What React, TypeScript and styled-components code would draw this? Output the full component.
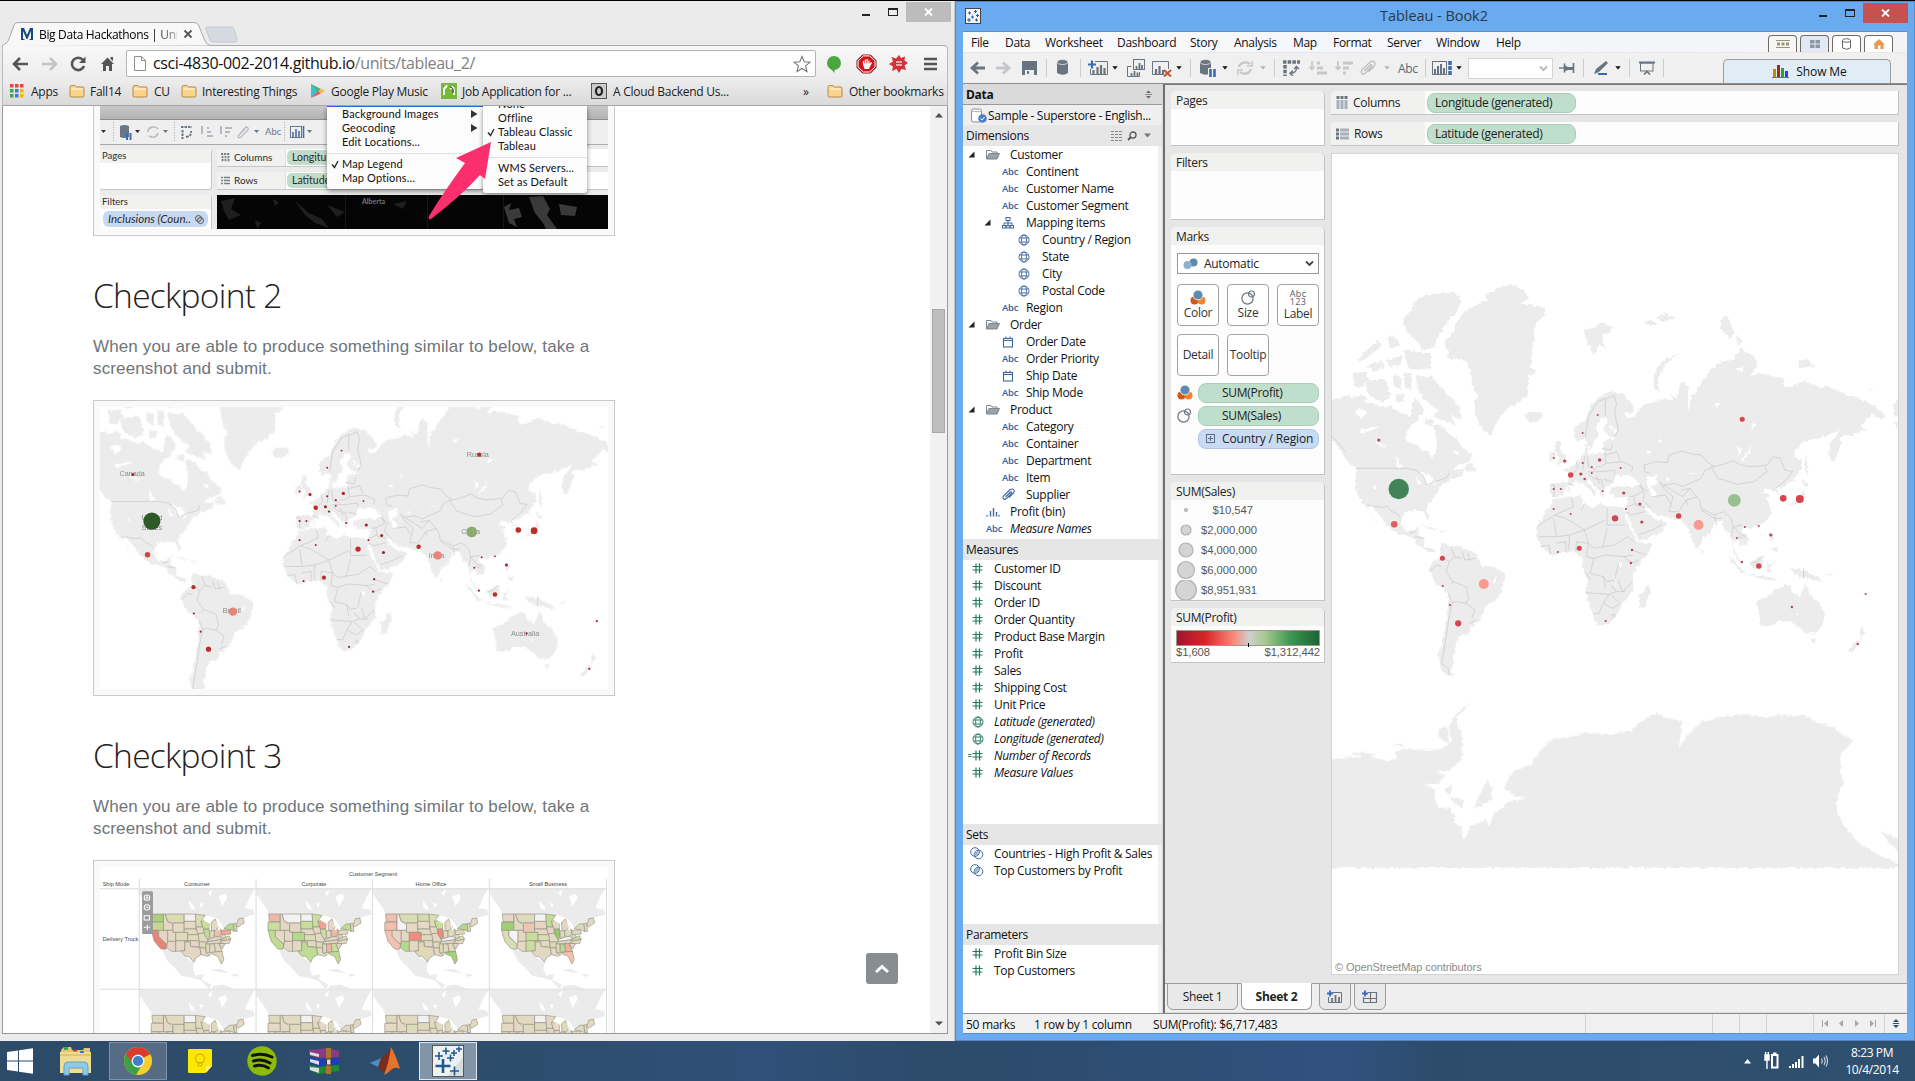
import React from "react";
import styled, { createGlobalStyle } from "styled-components";

const UI = '"Open Sans", "Noto Sans", sans-serif';
const ARIAL = '"Liberation Sans", Arial, sans-serif';
const MAC = 'Lato, "Open Sans", sans-serif';

const Global = createGlobalStyle`
  html, body { margin: 0; padding: 0; overflow: hidden; background: #2d4d6c; }
  * { box-sizing: border-box; }
  svg { display: block; flex: none; }
`;

/* ---------- world map ---------- */

const KX = 1 / 2.658;
const KY = 1 / 3;

const LAND = [
  "M10,390 L45,382 65,370 72,384 95,372 110,385 105,395 130,400 150,412 175,408 190,425 210,432 228,440 230,410 238,385 250,395 264,420 252,440 245,455 228,465 215,490 218,515 245,525 258,540 275,545 285,565 292,550 295,530 298,510 290,485 288,468 300,462 320,475 330,498 350,500 355,520 375,540 390,560 385,575 350,588 340,598 372,600 365,612 345,625 330,632 320,640 305,650 300,668 290,685 272,705 268,718 278,745 272,748 262,725 240,720 225,722 212,728 203,740 202,760 215,785 235,778 250,770 245,790 265,810 262,830 290,838 300,845 280,846 262,838 240,815 225,798 200,795 175,778 160,760 145,735 125,708 113,708 125,740 148,768 130,745 118,720 100,700 88,680 80,640 83,595 60,575 45,548 10,495Z",
  "M305,70 L340,65 365,90 350,125 330,150 305,190 290,230 260,240 245,215 215,180 207,150 230,120 235,95 265,75Z",
  "M490,42 L525,55 543,85 520,98 585,115 583,135 560,165 555,200 550,245 546,290 560,305 540,320 540,370 520,395 490,410 465,440 450,470 442,497 425,485 408,460 400,430 398,395 408,380 395,360 390,330 385,295 370,270 325,265 330,245 315,220 345,180 345,165 365,130 410,100 430,92 425,75 450,60Z",
  "M88,270 L110,240 140,210 150,230 120,255 100,272Z M110,290 L150,270 160,290 130,305Z M165,205 L185,195 200,230 175,235Z M165,270 L205,255 200,285 170,290Z M210,240 L280,250 282,298 225,298 215,270Z M75,310 L110,305 115,330 90,355 76,345Z M105,335 L160,325 175,385 150,395 115,372Z M180,315 L200,318 205,360 185,350Z M210,310 L230,310 228,360 212,350Z M186,375 L212,372 205,398 190,395Z M238,318 L285,320 305,350 325,370 360,415 362,450 335,435 348,465 310,450 290,440 300,420 275,400 250,365Z M265,445 L290,450 285,470 265,460Z M365,590 L390,580 402,605 385,608Z",
  "M530,432 L545,425 575,428 578,445 555,460 535,452Z M1530,388 L1508,400 1516,412 1508,430 1530,445Z M1512,458 L1530,455 1522,478Z",
  "M687,180 L715,172 735,160 762,170 758,190 735,192 745,240 728,222 715,258 700,225Z M845,155 L870,150 885,165 860,165Z M880,145 L905,128 930,145 905,155Z",
  "M945,250 L925,262 900,290 885,320 885,350 892,368 875,355 873,330 880,300 905,265Z",
  "M1065,135 L1077,150 1088,190 1075,205 1055,180 1050,155Z M1090,195 L1112,210 1100,228Z M1255,270 L1290,272 1300,288 1260,295Z M1442,355 L1458,358 1450,364Z",
  "M600,640 L645,640 650,615 632,600 655,590 668,575 685,560 692,545 690,520 700,525 698,550 720,552 743,545 738,532 745,510 775,504 752,498 740,478 752,455 745,440 735,445 722,470 728,495 715,515 705,542 697,520 692,505 672,515 662,500 665,470 692,450 707,405 730,380 760,362 790,372 825,412 815,430 795,425 805,445 820,440 830,425 850,402 880,395 905,385 925,395 915,370 938,385 942,345 955,333 965,350 965,425 975,380 985,365 1000,340 1025,300 1050,275 1085,270 1105,235 1145,260 1148,290 1130,318 1160,310 1195,320 1218,325 1222,355 1250,345 1275,332 1310,350 1340,350 1380,370 1420,385 1455,405 1490,435 1480,448 1450,430 1440,455 1425,465 1438,480 1400,495 1370,500 1372,520 1355,570 1345,575 1338,550 1345,515 1370,480 1345,490 1330,500 1300,508 1275,512 1250,540 1245,558 1268,570 1265,600 1243,632 1220,650 1200,655 1205,668 1228,690 1215,697 1208,672 1195,665 1172,655 1160,666 1182,672 1175,690 1187,715 1183,740 1160,765 1130,775 1112,770 1110,785 1125,800 1122,820 1105,828 1098,815 1088,812 1084,830 1095,850 1105,878 1100,878 1088,850 1082,820 1078,790 1062,780 1055,750 1040,755 1020,790 1000,810 992,838 982,830 970,795 965,770 945,752 915,740 885,738 870,728 860,712 850,712 862,735 875,745 885,755 892,745 907,760 895,785 860,805 835,812 825,790 810,750 800,725 800,712 805,690 808,680 775,684 758,672 757,655 785,650 820,650 838,642 818,620 800,612 790,625 780,612 770,620 768,635 755,648 745,650 738,680 725,660 712,640 700,625 697,640 722,665 715,680 710,665 685,640 665,632 645,650 630,678 610,685 598,670Z",
  "M1278,550 L1284,590 1280,622 1275,590Z M1265,630 L1290,640 1275,650Z M1270,655 L1278,680 1262,700 1228,706 1250,695 1265,678Z M615,512 L630,517 625,535 640,560 645,578 615,585 625,565 612,545Z M597,548 L612,548 610,570 595,575Z M646,650 L652,652 648,672Z",
  "M605,690 L640,680 680,678 687,700 715,712 730,700 760,712 790,712 802,728 797,740 815,780 830,815 868,822 860,850 830,890 818,915 820,960 790,1000 785,1020 755,1060 725,1067 712,1030 692,970 700,930 682,895 685,865 665,845 640,845 605,857 575,830 562,800 562,770 590,720Z",
  "M862,942 L865,960 850,1010 835,1012 835,980Z",
  "M312,820 L330,828 360,828 400,850 415,885 455,895 483,915 470,950 463,985 430,1005 410,1050 395,1070 385,1068 385,1090 355,1100 345,1135 340,1160 346,1180 330,1200 345,1217 325,1217 308,1200 302,1160 315,1100 325,1040 328,970 300,945 276,905 285,875 308,860 305,835Z",
  "M1148,995 L1185,975 1200,955 1220,945 1240,948 1238,965 1262,980 1278,937 1290,975 1310,995 1328,1030 1325,1060 1305,1090 1280,1090 1262,1075 1240,1055 1210,1052 1180,1068 1158,1068 1155,1040Z M1290,1105 L1305,1105 1298,1127Z M1422,1070 L1438,1090 1422,1108Z M1412,1112 L1425,1112 1400,1145 1388,1145Z",
  "M1068,850 L1100,885 1118,908 1105,905 1080,875Z M1115,912 L1175,920 1207,928 1170,930Z M1130,878 L1152,862 1165,855 1165,870 1158,897 1138,895Z M1175,880 L1195,878 1184,888 1186,908 1176,908Z M1232,893 L1270,900 1300,915 1325,936 1285,925 1260,922Z M1330,915 L1350,908 1346,918Z M1182,755 L1184,748 1182,768Z M1182,790 L1190,792 1192,810 1184,812Z M1185,835 L1203,830 1203,848Z M998,832 L1007,845 1001,852Z M248,765 L275,768 305,780 285,778Z M300,782 L330,786 308,788Z",
];

const ANTARCTICA =
  "M10,360 L60,352 120,350 165,363 192,360 185,335 215,325 240,330 295,330 322,320 335,305 330,255 345,225 390,185 350,232 350,255 365,280 365,340 355,370 325,395 292,395 320,408 300,430 262,432 295,450 290,470 300,500 330,505 345,530 345,550 362,560 370,600 390,555 430,540 435,560 450,520 490,485 535,475 505,468 480,450 478,430 500,395 552,370 570,335 600,298 650,290 690,278 760,285 815,270 845,240 880,220 910,235 950,242 940,325 960,290 1000,245 1050,230 1110,222 1170,232 1210,225 1280,228 1300,245 1350,262 1370,280 1405,300 1370,345 1370,400 1380,430 1362,460 1360,510 1380,560 1420,610 1480,650 1530,672 V684 H10Z M430,420 L445,440 442,480 410,503 395,500 415,455Z M320,450 L338,432 332,470 370,478 365,505 345,490Z M1475,573 L1530,600 1530,640 1500,610Z M300,265 L325,260 330,310 308,300Z M65,340 L90,335 140,345 110,352Z M178,315 L210,308 205,320Z";

const WATER =
  "M78,425 L100,415 112,430 95,445Z M90,480 L125,470 140,475 100,490Z M130,510 L150,520 165,530 148,528Z M185,555 L198,575 205,598 192,590Z M240,612 L256,640 245,640Z M250,608 L275,612 290,630 272,648 262,625Z M268,644 L300,632 290,645Z M335,545 L352,542 355,556Z M852,622 L880,618 882,640 868,648 884,680 868,678 858,650Z M858,540 L872,540 862,560Z M905,625 L920,625 912,636Z M965,610 L992,608 970,616Z M1133,528 L1128,548 1112,572 1106,568 1122,550Z M1095,530 L1106,540 1098,560Z M1132,458 L1145,465 1136,480Z M1035,400 L1055,398 1040,410Z M1088,295 L1112,288 1110,305Z M755,465 L765,470 760,490Z M767,475 L777,480 770,495Z M890,500 L896,510 890,522Z M778,880 L792,878 786,895Z M443,930 L458,920 452,938Z M768,915 L774,930 772,948Z M130,646 L138,650 134,656Z M1253,1025 L1260,1030 1255,1036Z";

const BORDERS =
  "M83,595 H215 L240,600 262,618 270,645 300,632 325,622 330,607 M18,500 L30,512 54,545 M113,706 L150,712 165,709 178,725 190,730 203,745 M225,790 L240,785 M240,800 L262,805 M308,860 L330,875 345,860 M335,832 L345,860 365,865 M365,845 L372,870 400,865 M380,850 L385,872 M330,875 L322,905 340,935 335,945 M276,905 L298,885 310,888 M340,935 L375,950 382,985 375,1000 M328,970 L338,998 350,995 375,1000 398,1020 390,1045 M385,1060 L402,1050 M338,998 L330,1040 322,1100 315,1150 310,1180 328,1195 330,1217 M692,500 L700,440 725,395 745,385 M745,385 L745,438 M745,388 L768,375 775,400 770,430 780,480 770,500 M600,645 L610,645 608,680 M645,640 L662,648 M668,575 L672,595 660,610 M690,560 L685,600 M698,558 L700,590 720,600 M743,548 L747,580 735,590 720,590 M700,605 L735,605 M747,580 L790,575 818,590 815,605 M735,535 L760,540 765,520 M745,555 L775,545 785,570 M735,605 L770,600 770,612 M700,612 L715,625 735,630 740,655 M720,615 L730,640 M740,628 L765,635 M848,585 L880,575 910,578 915,555 950,543 975,552 1000,555 1018,578 1035,590 1010,600 1000,625 950,650 930,640 900,645 890,635 M848,585 L850,605 865,610 M1035,590 L1062,582 1085,572 1105,585 1130,590 1155,588 1175,585 1190,560 1210,565 1222,600 1243,605 1225,630 1198,655 M1025,588 L1045,625 1095,643 1140,635 1175,605 1170,590 M890,635 L900,655 925,680 M900,645 L950,680 970,655 945,660 M925,680 L915,725 940,725 960,690 990,680 M970,655 L995,690 1000,715 1035,735 1060,725 1080,745 1085,770 1110,765 M958,690 L965,705 M1000,720 L1035,745 1055,745 M1036,735 L1040,765 M1085,770 L1080,800 M1085,770 L1100,790 1118,800 M1098,800 L1112,805 M838,642 L845,665 820,678 808,680 M850,665 L845,690 865,712 M820,678 L825,705 850,712 M800,712 L825,700 M800,725 L815,735 850,725 M832,795 L870,780 895,765 M835,648 L858,665 M870,680 L905,675 918,700 M610,735 L640,745 690,780 745,750 M655,685 L660,710 610,735 563,770 M690,700 L682,720 M750,712 V765 H795 M750,775 L745,800 738,830 M690,780 L700,820 715,835 738,830 770,825 805,800 M608,745 L615,800 570,800 M615,800 L650,795 690,780 M640,845 L640,815 615,820 M650,795 L648,840 M667,845 L668,815 700,820 M600,855 L595,825 575,830 M700,820 L695,860 715,865 745,855 795,860 820,855 M715,865 L705,910 740,920 750,935 770,930 780,880 M695,910 L705,930 M795,860 L815,880 835,870 M815,840 L855,855 M820,815 L805,800 M695,968 L755,973 775,965 760,945 M740,920 L745,955 M755,973 L740,1000 728,1030 712,1030 M740,1000 L765,1015 785,1000 760,975 M775,965 L800,965 M780,930 L790,965 818,935 M762,1036 L770,1032 772,1040 765,1044Z M1272,895 V925 M1132,880 L1150,875 1160,860 M606,548 L612,555";

type Tone = "green" | "sage" | "salmon" | "coral" | "red" | "dark";
const POINTS: [number, number, number, Tone][] = [
  [196, 657, 10.2, "green"], [1088, 691, 6.4, "sage"], [993, 765, 5, "salmon"], [422, 942, 5, "salmon"],
  [184, 763, 3.3, "coral"], [1262, 687, 4, "red"], [1218, 685, 3.3, "red"], [771, 745, 3.2, "red"],
  [653, 615, 2.7, "red"], [354, 1060, 3.1, "red"], [1153, 888, 2.7, "red"], [940, 738, 2.7, "red"],
  [676, 835, 2.5, "red"], [312, 865, 2.5, "red"], [1109, 448, 2.5, "red"], [143, 510, 1.6, "dark"],
  [637, 573, 1.6, "dark"], [730, 570, 1.7, "dark"], [680, 612, 1.6, "dark"], [794, 669, 1.6, "dark"],
  [837, 702, 1.6, "dark"], [842, 756, 1.6, "dark"], [1185, 795, 1.6, "dark"], [725, 435, 1, "dark"],
  [685, 489, 1, "dark"], [608, 564, 1.1, "dark"], [685, 579, 1.1, "dark"], [709, 591, 1.1, "dark"],
  [709, 609, 1, "dark"], [690, 627, 1.2, "dark"], [786, 594, 1, "dark"], [608, 657, 1.1, "dark"],
  [627, 657, 1.1, "dark"], [738, 663, 1.1, "dark"], [608, 717, 1.1, "dark"], [653, 732, 1, "dark"],
  [800, 717, 1.1, "dark"], [619, 846, 1.1, "dark"], [816, 840, 1.2, "dark"], [813, 879, 1.2, "dark"],
  [746, 1053, 1.1, "dark"], [313, 948, 1.1, "dark"], [332, 1005, 1.1, "dark"], [1095, 804, 1, "dark"],
  [1116, 771, 1, "dark"], [1153, 768, 1, "dark"], [1108, 876, 1.2, "dark"], [1241, 1011, 1.2, "dark"],
  [1416, 1122, 1.2, "dark"], [1437, 972, 1.1, "dark"],
];

const SOFT: Record<Tone, string> = {
  green: "#41845a", sage: "#9bc08f", salmon: "#f79b8f", coral: "#e0605a", red: "#d5454a", dark: "#bd4352",
};
const DEEP: Record<Tone, string> = {
  green: "#2d5a27", sage: "#8cab6e", salmon: "#e88578", coral: "#cb4a41", red: "#b92e2c", dark: "#a5222c",
};

const World = ({ id, tones, k, labels }: { id: string; tones: Record<Tone, string>; k: number; labels?: [string, number, number][] }) => (
  <>
    <defs>
      <filter id={id} x="-5%" y="-5%" width="110%" height="110%">
        <feTurbulence type="fractalNoise" baseFrequency="0.25" numOctaves="2" seed="4" result="n" />
        <feDisplacementMap in="SourceGraphic" in2="n" scale="5" xChannelSelector="R" yChannelSelector="G" />
      </filter>
    </defs>
    <g filter={`url(#${id})`}>
      <g transform={`scale(${KX} ${KY})`} fill="#ececec">
        {LAND.map((d) => <path key={d.slice(0, 16)} d={d} />)}
        <path d={ANTARCTICA} transform="translate(0 1110)" />
        <path d={WATER} fill="#fff" />
      </g>
    </g>
    <path d={BORDERS} transform={`scale(${KX} ${KY})`} fill="none" stroke="#cbcbcb" strokeWidth="2.200" strokeLinejoin="round" />
    {labels?.map(([t, x, y]) => (
      <text key={t} x={x * KX} y={y * KY + 2.5} textAnchor="middle" fontFamily={ARIAL} fontSize="7.6" fill="#8a8a8a">{t}</text>
    ))}
    {POINTS.map(([x, y, r, t]) => (
      <circle key={`${x}-${y}`} cx={x * KX} cy={y * KY} r={r < 2 ? r : r * k} fill={tones[t]} />
    ))}
  </>
);

/* ---------- shared window pieces ---------- */

const Desktop = styled.div`
  width: 1915px; height: 1081px; display: grid;
  grid-template: 1040px 40px / 955px 960px; border-top: 1px solid #000;
  font-family: ${UI}; font-size: 12px; color: #111; background: #2d4d6c;
`;
const Row = styled.div<{ w?: number; h?: number; gap?: number; pl?: number }>`
  display: flex; align-items: center; flex: none;
  ${(p) => p.w && `width:${p.w}px;`} ${(p) => p.h && `height:${p.h}px;`}
  ${(p) => p.gap && `gap:${p.gap}px;`} ${(p) => p.pl && `padding-left:${p.pl}px;`}
`;
const Spacer = styled.div`flex: 1;`;
const Controls = styled.div<{ pr: number }>`
  display: flex; justify-content: flex-end; align-items: flex-start; margin-left: auto; margin-right: ${(p) => p.pr}px; padding-top: 1px;
`;
const Close = styled.div<{ red?: boolean }>`
  width: 45px; height: 20px; display: grid; place-items: center; background: ${(p) => (p.red ? "#c75050" : "#bcbcbc")};
`;
const WindowButtons = ({ red, pr }: { red?: boolean; pr: number }) => (
  <Controls pr={pr}>
    <svg width="52" height="20">
      <path d="M8 13H16" stroke="#222" strokeWidth="2" />
      <rect x="34.500" y="6.500" width="9" height="7" fill="none" stroke="#222" />
      <path d="M34 7H44" stroke="#222" strokeWidth="2" />
    </svg>
    <Close red={red}>
      <svg width="9" height="8"><path d="M1 .5L8 7.500M8 .5L1 7.500" stroke="#fff" strokeWidth="1.800" /></svg>
    </Close>
  </Controls>
);

/* ---------- browser ---------- */

const Browser = styled.section`
  background: #ebebeb; display: flex; flex-direction: column; padding: 0 6px 7px 2px; border-right: 1px solid #c9c9c9; overflow: hidden; height: 1040px;
`;
const TabStrip = styled.div`height: 44px; display: flex; align-items: flex-start; justify-content: space-between; margin: 0 -3px 0 0;`;
const TabArea = styled.div`display: flex; align-items: flex-end; height: 44px; position: relative;`;
const TabShape = styled.svg`position: absolute; left: 0; top: 20px;`;
const TabText = styled.div`
  position: relative; display: flex; align-items: center; gap: 6px; height: 22px; padding-left: 19px;
  span { width: 138px; letter-spacing: -0.34px; white-space: nowrap; overflow: hidden;
    background: linear-gradient(90deg, #000 82%, #aaa 100%); -webkit-background-clip: text; color: transparent; }
`;
const NavBar = styled.div`
  height: 35px; display: flex; align-items: center; padding: 1px 0 0 8px; border-top: 1px solid #a9a9a9; border-left: 1px solid #bbb;
  border-right: 1px solid #bbb; background: linear-gradient(#f8f8f8, #ececec); border-radius: 0 4px 0 0;
`;
const Omnibox = styled.div`
  width: 690px; height: 27px; border: 1px solid #b3b3b3; border-radius: 2px; background: #fff; display: flex; align-items: center; padding: 0 4px 0 7px;
  font-size: 16px; white-space: nowrap; color: #111; letter-spacing: -0.4px;
  span { margin: -1px 0 0 7px; } em { font-style: normal; color: #808080; }
`;
const Bookmarks = styled.div`
  height: 26px; display: flex; align-items: center; background: linear-gradient(#ececec, #dadada); border-bottom: 1px solid #a7a7a7; border-left: 1px solid #bbb; border-right: 1px solid #bbb;
  padding: 0 0 3px 7px; letter-spacing: -0.26px; white-space: nowrap; color: #1c1c1c;
`;
const Mark = styled.div<{ w: number; gap: number }>`display: flex; align-items: center; flex: none; width: ${(p) => p.w}px; gap: ${(p) => p.gap}px;`;
const PageView = styled.div`flex: 1; min-height: 0; display: flex; background: #fff; border: 1px solid #999; border-top: 0; overflow: hidden;`;
const Article = styled.article`width: 522px; margin-left: 90px; flex: none;`;
const Figure = styled.div<{ h: number; cut?: boolean }>`
  height: ${(p) => p.h}px; border: 1px solid #c8c8c8; background: #f9f9f9; padding: ${(p) => (p.cut ? "0 6px 6px" : "6px")}; ${(p) => p.cut && "border-top: 0;"} overflow: hidden;
  > svg { background: #fff; }
`;
const H2 = styled.h2`
  margin: 34px 0 0; height: 54px; font: 300 33.500px/51px "Open Sans", sans-serif; letter-spacing: -0.7px; color: #222; white-space: nowrap;
`;
const P = styled.p`margin: 11px 0 21px; font: 17px/22px ${ARIAL}; letter-spacing: 0.14px; color: #6f7479; white-space: nowrap; position: relative; top: 1px;`;
const PageRest = styled.div`flex: 1; display: flex; justify-content: flex-end; align-items: flex-end; padding: 0 32px 49px 0;`;
const TopButton = styled.div`width: 32px; height: 31px; border-radius: 3px; background: #868e91; display: grid; place-items: center;`;
const Scroll = styled.div`width: 17px; background: #f1f1f1; display: flex; flex-direction: column; align-items: center; padding: 7px 0;`;
const Thumb = styled.div`width: 13px; height: 124px; margin-top: 191px; background: #bdbdbd; border: 1px solid #a8a8a8;`;

const Folder = () => (
  <svg width="16" height="14"><path d="M1 3.500Q1 1.500 2.500 1.500H6L7.500 3H14Q15 3 15 4V12Q15 13 14 13H2Q1 13 1 12Z" fill="#fbd48c" stroke="#b98a49" /><path d="M2 5H14" stroke="#fdeccb" strokeWidth="1.500" /></svg>
);
const AppsIcon = () => (
  <svg width="14" height="14">
    {["#e8453c", "#e8453c", "#e8453c", "#3aa757", "#3b78e7", "#f4b400", "#3aa757", "#3b78e7", "#f4b400"].map((c, i) => (
      <rect key={i} x={(i % 3) * 5} y={Math.floor(i / 3) * 5} width="3.500" height="3.500" fill={c} />
    ))}
  </svg>
);

/* embedded figure: map menu */
const Shot = styled.div`width: 508px; height: 123px; background: #ebebeb; position: relative; overflow: hidden; font: 9.500px ${MAC}; color: #2b2b2b; white-space: nowrap;`;
const ShotHead = styled.div`height: 14px; background: linear-gradient(#c8c8c8, #b2b2b2); border-bottom: 1px solid #8d8d8d;`;
const ShotTools = styled.div`height: 25px; border-bottom: 1px solid #aaa; display: flex; align-items: center; background: #efefef;`;
const ShotBody = styled.div`display: grid; grid-template-columns: 112px 391px; gap: 5px; padding-top: 4px;`;
const ShotStack = styled.div`display: flex; flex-direction: column; gap: 5px;`;
const ShotCard = styled.div<{ h: number }>`
  height: ${(p) => p.h}px; background: #fff; border-bottom: 1px solid #c6c6c6; border-right: 1px solid #c6c6c6; border-radius: 3px;
  > b { display: block; font-weight: 400; background: #f1f1f0; padding: 1px 2px; height: 14px; line-height: 12px; }
`;
const ShotShelf = styled.div`
  height: 18px; background: #fff; border-bottom: 1px solid #c6c6c6; display: flex; align-items: center; font-size: 10px;
  > span { width: 69px; height: 17px; line-height: 17px; background: #f1f1f0; padding-left: 4px; display: flex; align-items: center; gap: 4px; border-right: 1px solid #ddd; }
  > i { font-style: normal; width: 110px; height: 15px; line-height: 14px; border-radius: 5px; background: #c2dccb; padding-left: 5px; margin-left: 1px; font-size: 10.500px; }
`;
const ShotPill = styled.div`margin: 2px 3px; height: 16px; border-radius: 6px; background: #c7d9f1; padding: 0 4px 0 5px; font: italic 11.500px/16px ${MAC}; display: flex; align-items: center; justify-content: space-between;`;
const Dark = styled.div`height: 40px; background: #050505; margin-top: 0;`;
const Menu = styled.div<{ x: number; w: number; h: number; pad: number }>`
  position: absolute; left: ${(p) => p.x}px; top: 0; width: ${(p) => p.w}px; height: ${(p) => p.h}px; background: #fcfcfc; border-radius: 0 0 3px 3px;
  box-shadow: 0 2px 5px rgba(0,0,0,.45); padding-top: ${(p) => p.pad}px; font-size: 11px; line-height: 14px; color: #111; letter-spacing: 0.15px; border-top: 1px solid #2f63e0;
`;
const MenuItem = styled.div<{ sep?: boolean }>`
  height: 14px; display: grid; grid-template-columns: 15px 1fr 12px; ${(p) => p.sep && "border-top: 1px solid #e2e2e2; margin-top: 4px; padding-top: 3px; height: 18px;"}
  svg { align-self: center; }
`;
const Arrow = styled.svg`position: absolute; left: 325px; top: 34px; z-index: 1;`;
const Check = () => <svg width="12" height="10"><path d="M5 5.500L7.500 8.500L11 2" fill="none" stroke="#222" strokeWidth="1.300" /></svg>;
const Tri = () => <svg width="7" height="8"><path d="M0 0L6.500 4L0 8Z" fill="#333" /></svg>;

const MenuShot = () => (
  <Shot>
    <ShotHead />
    <ShotTools>
      <svg width="230" height="24" fill="#6b7583">
        <path d="M1 10H6L3.500 13Z M35 10H40L37.500 13Z" fill="#333" /><path d="M63 10H68L65.500 13Z M154 10H159L156.500 13Z M207 10H212L209.500 13Z" />
        <path d="M13.500 2V22M74.500 2V22M184.500 2V22" stroke="#aaa" strokeDasharray="1 1.500" />
        <path d="M20 6Q24.500 4 29 6V17Q24 19 20 17Z" /><path d="M27 13V20M30.500 13V20" stroke="#3b6fb5" strokeWidth="2" />
        <path d="M48 12A5.500 5 0 0 1 58 9M58 13A5.500 5 0 0 1 49 16" fill="none" stroke="#b9bdc2" strokeWidth="1.600" />
        <path d="M81 7H92M82.500 10V19M86 17Q92 16 91 11" fill="none" stroke="#6b7583" strokeWidth="2" strokeDasharray="2.500 1" />
        <path d="M102 6V14M107 8H109M107 12H111M107 16H113" fill="none" stroke="#b4b9bf" strokeWidth="2" />
        <path d="M121 6V14M125 8H132M125 12H130M125 16H127" fill="none" stroke="#b4b9bf" strokeWidth="2" />
        <path d="M139 15L146 7Q149 7 148 10L141 17Q138 19 138 16L145 9" fill="none" stroke="#b4b9bf" strokeWidth="1.300" />
        <text x="165" y="15" fontSize="9.500" fontFamily={MAC}>Abc</text>
        <rect x="190.500" y="6.500" width="11" height="11" fill="none" stroke="#6b7583" /><path d="M193 12V17M196 9V17M199 11V17M203.500 6V18" stroke="#4870a8" strokeWidth="1.600" />
      </svg>
    </ShotTools>
    <ShotBody>
      <ShotStack>
        <ShotCard h={41}><b>Pages</b></ShotCard>
        <ShotCard h={50}><b>Filters</b><ShotPill>Inclusions (Coun.. <svg width="9" height="9"><circle cx="3.500" cy="3.500" r="3" fill="#c8cdd5" stroke="#555" /><circle cx="5.500" cy="5.500" r="3" fill="none" stroke="#555" /></svg></ShotPill></ShotCard>
      </ShotStack>
      <ShotStack>
        <ShotShelf><span><svg width="9" height="9"><path d="M0 1H9M1.500 3V9M4.500 3V9M7.500 3V9" stroke="#777f8b" strokeWidth="1.800" strokeDasharray="2.200 .8" /></svg>Columns</span><i>Longitu</i></ShotShelf>
        <ShotShelf><span><svg width="9" height="9"><path d="M0 1.500H9M0 4.500H9M0 7.500H9" stroke="#777f8b" strokeWidth="1.600" strokeDasharray="2 1 6" /></svg>Rows</span><i>Latitude</i></ShotShelf>
        <Dark>
          <svg width="391" height="40" fill="#1f1f1f">
            <path d="M4 6L18 3 14 14 24 20 12 25 7 16Z M78 6L92 18 105 24 112 33 98 28 88 20Z M110 10L128 17 120 22Z M38 25L44 28 40 34Z M56 4L62 7 58 11Z M176 9L190 6 186 14Z" />
            <path d="M287 12L294 8 292 15 302 13 305 22 297 24 300 32 292 28Z M312 2L326 1 333 14 330 20 340 34 342 40H332L326 28 318 18Z M342 9L360 12 358 21 344 20Z" fill="#3a3a3a" />
            <path d="M128.500 0V40M210.500 0V40M286.500 0V40" stroke="#161616" />
            <text x="145" y="9" fontFamily={MAC} fontSize="7" fontWeight="700" fill="#777">Alberta</text>
          </svg>
        </Dark>
      </ShotStack>
    </ShotBody>
    <Menu x={227} w={156} h={83} pad={0}>
      <MenuItem><span />Background Images<Tri /></MenuItem>
      <MenuItem><span />Geocoding<Tri /></MenuItem>
      <MenuItem><span />Edit Locations...</MenuItem>
      <MenuItem sep><Check />Map Legend</MenuItem>
      <MenuItem><span />Map Options...</MenuItem>
    </Menu>
    <Arrow width="70" height="82"><path d="M66 2L60 39 55 35Q36 56 6 79Q3 80 4 76Q20 50 40 23L31 18Z" fill="#fb2f6d" /></Arrow>
    <Menu x={383} w={104} h={87} pad={0} style={{ borderTop: 0 }}>
      <MenuItem style={{ marginTop: -9 }}><span />None</MenuItem>
      <MenuItem><span />Offline</MenuItem>
      <MenuItem><Check />Tableau Classic</MenuItem>
      <MenuItem><span />Tableau</MenuItem>
      <MenuItem sep><span />WMS Servers...</MenuItem>
      <MenuItem><span />Set as Default</MenuItem>
    </Menu>
  </Shot>
);

/* embedded figure: state maps */
const STATES: Record<string, string> = {
  WA: "205,523 238,523 238,547 207,545", OR: "203,547 238,547 238,572 203,572", CA: "203,572 224,572 224,590 248,615 245,629 230,627 212,605",
  NV: "224,572 250,572 250,605 247,614 224,590", ID: "238,523 243,523 250,545 265,555 265,572 238,572", MT: "243,523 297,523 297,550 265,550 250,545",
  WY: "265,550 297,550 297,578 265,578", UT: "250,572 265,572 265,578 273,578 273,605 250,605", CO: "273,578 307,578 307,603 273,603",
  AZ: "250,605 273,605 273,635 262,635 247,625", NM: "273,603 299,603 299,633 273,635", ND: "297,523 329,523 331,545 297,545",
  SD: "297,545 331,545 331,568 297,568", NE: "297,568 331,568 340,585 307,585 307,578 297,578", KS: "307,585 340,585 340,603 307,603",
  OK: "299,603 340,603 340,622 315,620 315,607 299,607", TX: "315,607 315,620 342,624 345,645 330,655 325,668 310,650 300,650 288,635 299,633 299,607",
  MN: "329,523 357,527 345,545 350,562 331,562", IA: "331,562 352,562 356,575 350,582 335,582", MO: "337,582 355,580 365,600 362,608 340,606",
  AR: "340,606 362,608 358,625 342,624", LA: "342,624 358,625 360,640 372,645 365,650 345,645", WI: "345,545 362,540 370,552 368,568 352,568",
  IL: "352,570 368,568 370,590 364,600 355,585", MI: "374,548 385,538 396,560 388,573 375,573", IN: "370,573 383,573 383,592 370,596",
  OH: "383,573 402,568 403,585 392,592 383,588", KY: "365,600 383,592 400,590 402,600 365,606", TN: "362,606 405,600 400,611 360,613",
  MS: "358,613 370,613 370,640 360,640", AL: "370,613 383,613 386,635 370,640", GA: "383,611 396,611 405,635 386,636",
  FL: "375,638 405,635 410,660 403,673 393,650 375,642", SC: "396,611 414,612 405,628", NC: "402,604 430,598 425,612 400,611",
  VA: "402,600 425,588 430,598 404,604", WV: "403,588 412,582 416,592 405,598", PA: "403,572 428,570 430,583 405,585",
  NY: "410,567 425,553 438,552 440,575 428,570", NE2: "438,552 445,550 448,575 440,575", ME: "446,556 452,537 465,535 468,550 450,562",
};
const BASE = ["#e5d9c4", "#e2d9c2", "#dfdabd", "#e6d5c4", "#e4d8c4", "#dadcb4"];
const TINTS: Record<string, string>[] = [
  { WA: "#a7d17a", OR: "#c2d992", CA: "#ea8477", ND: "#f0f0f0", NY: "#b9d98a", OH: "#ecc0ab", IL: "#bfdc93", PA: "#f0a594", WI: "#c6de9a", VA: "#cfdfa4", NE2: "#cfdfa4" },
  { WA: "#f0b6a6", CA: "#bfdc93", OR: "#c9dfa0", CO: "#b5d98a", TX: "#c0dc93", WI: "#f3a298", SD: "#c6de9a", FL: "#c0dc93", ND: "#f2f2f2", AL: "#f0b6a6", NY: "#c0dc93", GA: "#c9dfa0", IL: "#c9dfa0", OH: "#f0b6a6", MN: "#c9dfa0", MT: "#f2f2f2" },
  { WA: "#f0bfae", OR: "#f0bfae", CA: "#f3c2b4", CO: "#f08d80", AZ: "#b5d98a", IL: "#ef8a7e", FL: "#a5d077", ID: "#f4f4f4", TX: "#dfd9b8", ND: "#d5dcae", KY: "#f4f4f4", WI: "#c9dfa0", NY: "#b5d98a" },
  { OR: "#a2cf74", NV: "#f4f4f4", CO: "#c6de9a", NM: "#c9dfa0", IL: "#97c96b", MN: "#c0dc93", FL: "#f0c2b0", GA: "#f0b0a0", AL: "#b5d98a", ND: "#f4f4f4", KY: "#f4f4f4", WY: "#ecc6b4", VA: "#c9dfa0" },
];
const StateMap = ({ n, dy }: { n: number; dy: number }) => (
  <g transform={`translate(${n * 333} ${dy})`}>
    <path d="M170,447 H498 L485,470 470,505 495,510 498,525 480,530 467,535 450,548 430,552 412,567 395,540 372,530 357,527 329,523 H205 L198,505 180,480 170,462Z" fill="#ebebeb" />
    <path d="M310,482 L325,500 328,512 314,505Z M365,460 L378,448 372,470Z M395,470 L415,462 420,475 405,500Z M340,490 L352,492 346,505Z" fill="#fff" />
    <path d="M232,628 L262,635 273,635 288,635 300,652 325,670 322,690 330,708 352,702 348,720 375,735 368,748 345,722 320,715 290,708 275,690 255,665Z M235,635 L260,668 265,680 250,665Z M370,690 L400,688 425,700 400,698Z M430,702 L455,705 440,712Z M380,738 L410,735 440,748 375,748Z" fill="#ebebeb" />
    <g stroke="#8e8b80" strokeWidth="1.800" strokeLinejoin="round">
      {Object.entries(STATES).map(([k, pts], i) => (
        <polygon key={k} points={pts} fill={(dy === 0 ? TINTS[n][k] : k === "ND" ? "#f2f2f2" : undefined) ?? BASE[(i * 7 + n * 3 + (dy ? 2 : 0)) % (dy ? 3 : 6)]} />
      ))}
    </g>
    <path d="M350,540 L368,530 378,536 372,548 372,568 369,566 370,552Z M388,540 L398,552 394,566Z M385,574 L400,566 398,571Z" fill="#fff" />
  </g>
);
const StatesChart = () => (
  <svg width="508" height="300">
    <g transform="translate(-20 -127.300)">
      <g transform="scale(.35075 .33333)">
        {[0, 304].map((dy) => [0, 1, 2, 3].map((n) => <StateMap key={`${dy}${n}`} n={n} dy={dy} />))}
        <path d="M169,418V900M502,418V900M834,418V900M1167,418V900M1501,418V900M57,447H1501M57,749H1501" stroke="#dcdcdc" strokeWidth="3" fill="none" />
        <rect x="177" y="455" width="31" height="128" rx="4" fill="#9b9b9b" />
        <g stroke="#fff" fill="none" strokeWidth="3"><circle cx="191" cy="474" r="8" /><circle cx="191" cy="503" r="8" /><path d="M187 474H195M191 470V478M187 503H195" /><rect x="183" y="528" width="15" height="13" /><path d="M182 563H200M192 555V572" /></g>
      </g>
    </g>
    <g fontFamily={ARIAL} fontSize="5.600" fill="#444" textAnchor="middle">
      <text x="273" y="8.700">Customer Segment</text><text x="16" y="19">Ship Mode</text><text x="97" y="19">Consumer</text>
      <text x="214" y="19">Corporate</text><text x="331" y="19">Home Office</text><text x="448" y="19">Small Business</text><text x="20.500" y="74">Delivery Truck</text>
    </g>
  </svg>
);

const BrowserWindow = () => (
  <Browser>
    <TabStrip>
      <TabArea>
        <TabShape width="240" height="25">
          <path d="M0 25L4 22Q6 21 7 18L12 4Q13 1.500 16 1.500H192Q195 1.500 196.500 4L203 20Q205 24.500 210 24.500" fill="#f8f8f8" stroke="#a9a9a9" />
          <path d="M204 8Q203 6 206 6H229Q231 6 232 8L235 18Q235.500 21 233 21H211Q209 21 208 19Z" fill="#d5d9e0" stroke="#c4c8cf" />
        </TabShape>
        <TabText>
          <svg width="12" height="12"><path d="M0 0H3L6 7 9 0H12V12H8.500V11L10 11V3L6.500 11H5.500L2 3V11H3.500V12H0Z" fill="#17497f" /></svg>
          <span>Big Data Hackathons | Uni</span>
          <svg width="12" height="10"><path d="M1.500 1.500L8.500 8.500M8.500 1.500L1.500 8.500" stroke="#555" strokeWidth="1.800" /></svg>
        </TabText>
      </TabArea>
      <WindowButtons pr={0} />
    </TabStrip>
    <NavBar>
      <svg width="115" height="24" fill="none" stroke="#555" strokeWidth="2.600">
        <path d="M17 12H3M9 6L3 12L9 18" /><path d="M31 12H45M39 6L45 12L39 18" stroke="#c4c4c4" />
        <path d="M72 8A6.200 6.200 0 1 0 73 14" /><path d="M74.500 4.500V11H68Z" fill="#555" stroke="none" />
        <path d="M90 12L96.500 5.500L103 12H101V19H98V14H95V19H92V12Z M99.500 5H102V9L99.500 7Z" fill="#555" stroke="none" />
      </svg>
      <Omnibox>
        <svg width="12" height="15"><path d="M.5 .5H7.500L11.500 4.500V14.500H.5Z M7.500 .5V4.500H11.500" fill="#fff" stroke="#8f8f8f" /></svg>
        <span>csci-4830-002-2014.github.io<em>/units/tableau_2/</em></span>
        <Spacer />
        <svg width="18" height="18"><path d="M9 1.500L11.200 6.800 17 7.200 12.600 10.900 14 16.500 9 13.500 4 16.500 5.400 10.900 1 7.200 6.800 6.800Z" fill="none" stroke="#777" strokeWidth="1.100" /></svg>
      </Omnibox>
      <svg width="126" height="24">
        <circle cx="18" cy="11" r="7" fill="#4ca640" /><path d="M13 15L18.500 21V15Z" fill="#4ca640" />
        <g transform="translate(1 0)">
          <path d="M45.500 3H53.500L59 8.500V15.500L53.500 21H45.500L40 15.500V8.500Z" fill="#d8121a" stroke="#6a2525" />
          <path d="M46.300 3.900H52.700L58 9V15L52.700 20H46.300L41 15V9Z" fill="none" stroke="#fff" />
          <path d="M46.500 12.500V9M48.300 12V7.500M50.100 12V7M51.900 12V8.500M46.500 12H53L54.500 10.500L51.500 16.500H48Z" stroke="#fff" strokeWidth="1.200" fill="#fff" />
        </g>
        <path transform="translate(1 0)" d="M82 3L84 6 88 4.500 87.500 8.500 91 11 87.500 13.500 89 18 84.500 17 82 21 79.500 17 75 19 76 14.500 72 12 76 9.500 74.500 5 79 6.500Z" fill="#d2323a" /><path d="M80 10H86M80 13H86" stroke="#f5cfcf" strokeWidth="1.500" />
        <path d="M108 7H121M108 12H121M108 17H121" stroke="#555" strokeWidth="2.600" />
      </svg>
    </NavBar>
    <Bookmarks>
      <Mark w={59} gap={7}><AppsIcon />Apps</Mark>
      <Mark w={63} gap={5}><Folder />Fall14</Mark>
      <Mark w={49} gap={6}><Folder />CU</Mark>
      <Mark w={130} gap={5}><Folder />Interesting Things</Mark>
      <Mark w={130} gap={6}><svg width="14" height="16"><path d="M0 1V15L8 8Z" fill="#35c5c9" /><path d="M0 1L10 6 7 9Z" fill="#4fae7d" /><path d="M7 8L10 5.500 14 8 10 10.500Z" fill="#f2b84b" /><path d="M0 15L7 8 10 10.500Z" fill="#e25c58" /></svg>Google Play Music</Mark>
      <Mark w={150} gap={5}><svg width="16" height="16"><rect width="16" height="16" fill="#75b83b" /><path d="M3 12V7Q3 4 6 4M6 4L5 2M10 4Q13 4 13 7V12M9 6L11 4" stroke="#fff" strokeWidth="1.800" fill="none" /><path d="M9 4Q13 4 12 10" stroke="#222" fill="none" /></svg>Job Application for ...</Mark>
      <Mark w={142} gap={6}><svg width="16" height="16"><rect x=".5" y=".5" width="15" height="15" fill="#ccc" stroke="#555" /><ellipse cx="8" cy="8" rx="3" ry="4" fill="none" stroke="#222" strokeWidth="2.200" /></svg>A Cloud Backend Us...</Mark>
      <Spacer />
      <Mark w={24} gap={0}>»</Mark>
      <Mark w={120} gap={6}><Folder />Other bookmarks</Mark>
    </Bookmarks>
    <PageView>
      <Article>
        <Figure h={130} cut><MenuShot /></Figure>
        <H2>Checkpoint 2</H2>
        <P>When you are able to produce something similar to below, take a<br />screenshot and submit.</P>
        <Figure h={296}>
          <svg width="508" height="282">
            <g transform="translate(-18.400 -94.600) scale(.953)">
              <World id="coastA" tones={DEEP} k={0.88} labels={[["Canada", 141, 508], ["United", 196, 647], ["States", 196, 676], ["Russia", 1105, 448], ["China", 1085, 691], ["India", 990, 765], ["Brazil", 419, 940], ["Australia", 1237, 1010]]} />
            </g>
          </svg>
        </Figure>
        <H2>Checkpoint 3</H2>
        <P>When you are able to produce something similar to below, take a<br />screenshot and submit.</P>
        <Figure h={320}><StatesChart /></Figure>
      </Article>
      <PageRest><TopButton><svg width="16" height="10"><path d="M2 8L8 2.500L14 8" fill="none" stroke="#fff" strokeWidth="3" /></svg></TopButton></PageRest>
      <Scroll>
        <svg width="8" height="5"><path d="M0 4.500L4 0L8 4.500Z" fill="#505050" /></svg>
        <Thumb /><Spacer />
        <svg width="8" height="5"><path d="M0 .5L4 4.500L8 .5Z" fill="#505050" /></svg>
      </Scroll>
    </PageView>
  </Browser>
);

/* ---------- tableau ---------- */

const Tableau = styled.section`
  background: #69abee; border: 1px solid #5289c0; display: flex; flex-direction: column; padding: 0 7px 6px; height: 1040px; letter-spacing: -0.3px;
`;
const TitleBar = styled.header`
  height: 29px; display: grid; grid-template-columns: 368px 1fr 370px; align-items: start;
  > svg { margin: 6px 0 0 2px; } h1 { margin: 3px 0 0; text-align: center; font: 400 14.500px/22px ${UI}; letter-spacing: -0.05px; color: #2b3847; }
`;
const Inner = styled.div`flex: 1; display: flex; flex-direction: column; border: 1px solid #5a91c8; border-width: 1px 0 1px 0; background: #efefef; min-height: 0;`;
const MenuBar = styled.nav`height: 21px; display: flex; background: linear-gradient(90deg,#f8f9fb,#f2f4f8); padding: 0 14px 0 8px; line-height: 22px; border-bottom: 1px solid #e9e9e9;`;
const Word = styled.span<{ w: number }>`width: ${(p) => p.w}px; flex: none; white-space: nowrap;`;
const Corner = styled.div<{ bg: string }>`width: 29px; height: 17px; margin: 3px 0 0 3px; border: 1px solid #6f6c66; border-bottom: 0; border-radius: 4px 4px 0 0; background: ${(p) => p.bg}; display: grid; place-items: center;`;
const ToolBar = styled.div`height: 31px; display: flex; align-items: center; padding: 0 16px 0 7px; border-bottom: 1px solid #8d8d8d; background: #f0f0f0;`;
const Cell = styled.div<{ w: number }>`width: ${(p) => p.w}px; flex: none; display: flex; align-items: center; height: 20px; color: #5d6876; font-size: 12px;`;
const Sep = styled.div<{ w: number }>`width: ${(p) => p.w}px; flex: none; height: 18px; border-left: 1px solid #cdcdcd;`;
const Combo = styled.div`width: 85px; height: 21px; border: 1px solid #d4d4d4; background: #fff; margin-right: 6px; display: flex; align-items: center; justify-content: flex-end; padding-right: 4px;`;
const ShowMe = styled.div`width: 168px; height: 24px; align-self: flex-end; border: 1px solid #9b9b9b; border-bottom: 0; border-radius: 5px 5px 0 0; background: #e0ecf6; display: flex; align-items: center; justify-content: center; gap: 7px; padding-left: 5px; font-size: 12px; letter-spacing: -0.1px;`;
const Work = styled.div`flex: 1; min-height: 0; display: flex;`;
const Side = styled.aside`width: 200px; background: #fff; border-right: 1px solid #d8d8d8; display: flex; flex-direction: column; flex: none;`;
const SideHead = styled.div<{ h?: number; bg?: string; bold?: boolean }>`
  height: ${(p) => p.h ?? 21}px; background: ${(p) => p.bg ?? "#e6e6e6"}; font-weight: ${(p) => (p.bold ? 700 : 400)}; display: flex; align-items: center; padding: 0 10px 0 3px; gap: 4px; flex: none; white-space: nowrap;
`;
const List = styled.div<{ h: number }>`height: ${(p) => p.h}px; flex: none; border-right: 4px solid #f0f0f0;`;
const Field = styled.div<{ pl: number; it?: boolean }>`
  height: 17px; display: flex; align-items: center; padding-left: ${(p) => p.pl}px; white-space: nowrap; line-height: 17px; font-style: ${(p) => (p.it ? "italic" : "normal")}; color: #111;
`;
const Slot = styled.span<{ w: number }>`width: ${(p) => p.w}px; flex: none; display: flex; align-items: center;`;
const AbcTag = styled.b`font: 600 9.500px/14px ${UI}; color: #355f9c; letter-spacing: -0.2px;`;

const BL = "#3d68a3";
const GR = "#237a5f";
const Globe = ({ c }: { c: string }) => <svg width="12" height="12" fill="none" stroke={c} strokeWidth=".9"><circle cx="6" cy="6" r="5" /><ellipse cx="6" cy="6" rx="2.400" ry="5" /><path d="M1.500 4H10.500M1.500 8H10.500" /></svg>;
const Hash = ({ eq }: { eq?: boolean }) => <svg width={eq ? 15 : 11} height="11" stroke={GR} strokeWidth="1.200" fill="none"><path transform={eq ? "translate(4 0)" : undefined} d="M4 .5V10.500M7.500 .5V10.500M.5 3.500H10.500M.5 7H10.500" />{eq && <path d="M0 4.500H3.500M0 6.500H3.500" strokeWidth=".9" />}</svg>;
const Cal = () => <svg width="12" height="12" fill="none" stroke={BL} strokeWidth="1.100"><rect x="1.500" y="2.500" width="9" height="8.500" /><path d="M1.500 4.500H10.500M4 .5V3M8 .5V3" /></svg>;
const OpenFolder = () => <svg width="14" height="11"><path d="M.5 10V1.500H5L6 3H11V5" fill="#fff" stroke="#7e8690" /><path d="M.5 10L3 4.500H13.500L11 10Z" fill="#9aa1a9" stroke="#7e8690" /></svg>;
const Hier = () => <svg width="12" height="12" fill="none" stroke={BL} strokeWidth="1"><rect x="4" y=".5" width="4" height="3" /><rect x=".5" y="8.500" width="3" height="2.500" /><rect x="4.700" y="8.500" width="2.600" height="2.500" /><rect x="8.500" y="8.500" width="3" height="2.500" /><path d="M6 3.500V8.500M2 8.500V6H10V8.500" /></svg>;
const Clip = ({ c = BL, s = 13 }: { c?: string; s?: number }) => <svg width={s} height={s} viewBox="0 0 13 13" fill="none" stroke={c} strokeWidth="1.100"><path d="M3.500 9L8.500 4Q9.800 3.300 9.800 4.800L4.500 10.500Q2 12.500 1 10Q.8 8.500 2 7.500L8 1.800Q10.500 .2 12 2Q12.600 3.500 11.500 5L7 9.500" /></svg>;
const Bins = () => <svg width="14" height="10"><path d="M1 9.500V8M4.500 9.500V4M7.500 9.500V1M10.500 9.500V5M13 9.500V8" stroke={BL} strokeWidth="1.400" /></svg>;
const Expander = () => <svg width="7" height="7"><path d="M6.500 .5V6.500H.5Z" fill="#222" /></svg>;
const SetIcon = () => <svg width="14" height="13" fill="none" stroke={BL}><circle cx="5" cy="5" r="4.300" /><circle cx="8.500" cy="7.500" r="4.300" /><path d="M4.500 7.500Q5 4 8.500 4Q9 8 5 9Z" fill="#9bb5d8" stroke="none" /></svg>;

type Kind = "abc" | "globe" | "cal" | "clip" | "hier" | "folder" | "bins";
const kinds: Record<Kind, React.ReactNode> = {
  abc: <AbcTag>Abc</AbcTag>, globe: <Globe c={BL} />, cal: <Cal />, clip: <Clip />, hier: <Hier />, folder: <OpenFolder />, bins: <Bins />,
};
const DIMS: [number, Kind, string, boolean?][] = [
  [0, "folder", "Customer"], [1, "abc", "Continent"], [1, "abc", "Customer Name"], [1, "abc", "Customer Segment"], [1, "hier", "Mapping items"],
  [2, "globe", "Country / Region"], [2, "globe", "State"], [2, "globe", "City"], [2, "globe", "Postal Code"], [1, "abc", "Region"],
  [0, "folder", "Order"], [1, "cal", "Order Date"], [1, "abc", "Order Priority"], [1, "cal", "Ship Date"], [1, "abc", "Ship Mode"],
  [0, "folder", "Product"], [1, "abc", "Category"], [1, "abc", "Container"], [1, "abc", "Department"], [1, "abc", "Item"], [1, "clip", "Supplier"],
  [0, "bins", "Profit (bin)"], [0, "abc", "Measure Names", true],
];
const MEASURES = ["Customer ID", "Discount", "Order ID", "Order Quantity", "Product Base Margin", "Profit", "Sales", "Shipping Cost", "Unit Price"];

const Canvas = styled.div`flex: 1; min-width: 0; display: flex; flex-direction: column; border-left: 2px solid #6f6f6f; background: #e6e6e6;`;
const Panels = styled.div`height: 899px; display: grid; grid-template-columns: 154px 568px; column-gap: 6px; padding: 6px 0 0 6px; border-top: 1px solid #777;`;
const Stack = styled.div`display: flex; flex-direction: column; gap: 7px;`;
const Card = styled.div<{ h: number }>`
  height: ${(p) => p.h}px; background: #fdfdfd; border-radius: 5px 5px 0 0; border-right: 1px solid #c3c3c3; border-bottom: 1px solid #c3c3c3; overflow: hidden; flex: none;
`;
const CardTitle = styled.div`height: 18px; background: #f1f1ef; padding-left: 5px; line-height: 19px; font-size: 12px; color: #222;`;
const Shelf = styled.div`height: 24px; flex: none; background: #fdfdfd; border-right: 1px solid #c3c3c3; border-bottom: 1px solid #c3c3c3; border-radius: 5px 0 0 0; overflow: hidden; display: flex; align-items: center;`;
const ShelfName = styled.div`width: 94px; height: 24px; background: #f1f1ef; display: flex; align-items: center; gap: 5px; padding-left: 5px; margin-right: 2px; color: #222;`;
const Pill = styled.div<{ w: number; blue?: boolean; pl: number }>`
  width: ${(p) => p.w}px; height: 20px; border-radius: 8px; background: ${(p) => (p.blue ? "#c8daf4" : "#bfdecb")}; border: 1px solid ${(p) => (p.blue ? "#b1c6e6" : "#a9cdb8")};
  display: flex; align-items: center; padding-left: ${(p) => p.pl}px; white-space: nowrap; color: #222; gap: 8px;
`;
const Viz = styled.div`height: 822px; background: #fff; border: 1px solid #d3d3d3; display: flex; flex-direction: column; position: relative;`;
const Credit = styled.div`position: absolute; left: 3px; bottom: 0; font: 11px/13px ${ARIAL}; color: #8a8a8a; letter-spacing: -0.1px;`;
const Select = styled.div`width: 142px; height: 21px; border: 1px solid #9a9a9a; background: #fff; margin: 8px 0 10px 6px; display: flex; align-items: center; padding: 0 4px 0 5px; gap: 6px; color: #222;`;
const MarkGrid = styled.div`display: grid; grid-template-columns: repeat(3, 42px); gap: 8px; padding-left: 6px;`;
const MarkBtn = styled.div`height: 42px; border: 1px solid #a3a3a3; border-radius: 4px; background: #fff; display: flex; flex-direction: column; align-items: center; justify-content: center; gap: 0; color: #333; line-height: 16px; font-size: 12px;`;
const MarkRow = styled.div`display: flex; align-items: center; height: 23px; padding-left: 6px; > span { width: 21px; flex: none; }`;
const Abc123 = styled.div`font-size: 9px; line-height: 8px; color: #4f5a69; text-align: center; letter-spacing: 0.4px; padding-top: 1px; span { display: block; height: 8px; }`;
const Legend = styled.div`height: 20px; display: flex; align-items: center; font: 11.300px ${ARIAL}; color: #585858; letter-spacing: -0.05px; padding-right: 71px; justify-content: space-between;`;
const Ramp = styled.div`
  margin: 4px 4px 0 5px; height: 16px; border: 1px solid #9c9787; background: linear-gradient(90deg, #a01530, #d62626 20%, #fa8a7c 40%, #cfcfcf 51%, #a6c98f 62%, #3d9653 80%, #1a6433);
  display: flex; justify-content: center; align-items: flex-end; &::after { content: ""; width: 1px; height: 4px; background: #000; margin: 0 0 -2px 1px; }
`;
const RampText = styled.div`display: flex; justify-content: space-between; padding: 0 4px 0 5px; font: 11.300px/13px ${ARIAL}; color: #585858; letter-spacing: -0.100px;`;
const Tabs = styled.div`flex: 1; border-top: 1px solid #9b9b9b; background: #efefef; display: flex; padding-left: 2px; border-bottom: 1px solid #ddd;`;
const SheetTab = styled.div<{ w: number; on?: boolean; ml: number }>`
  width: ${(p) => p.w}px; height: 27px; margin: -1px 0 0 ${(p) => p.ml}px; border: 1px solid #9d9d9d; border-top: ${(p) => (p.on ? "1px solid #fff" : "1px solid #9d9d9d")}; border-radius: 0 0 6px 6px;
  background: ${(p) => (p.on ? "#fff" : "#e9e9e9")}; font-weight: ${(p) => (p.on ? 700 : 400)}; display: grid; place-items: center; color: #222;
`;
const Status = styled.footer`height: 20px; border-top: 1px solid #8d8d8d; background: #f0f0f0; display: flex; align-items: center; padding-left: 3px; line-height: 18px; flex: none; > span { padding-top: 2px; }`;
const Slice = styled.div<{ w: number }>`width: ${(p) => p.w}px; height: 19px; border-left: 1px solid #d2d2d2; flex: none;`;

const G = "#6a7481";
const L = "#c5c7ca";
const Caret = ({ c = "#111" }: { c?: string }) => <svg width="6" height="4"><path d="M.3 .3H5.700L3 3.500Z" fill={c} /></svg>;
const ColorIcon = () => <svg width="16" height="15"><circle cx="4.500" cy="10.500" r="4" fill="#cc5a1b" /><circle cx="11.500" cy="10.500" r="4" fill="#f58231" /><circle cx="8" cy="5" r="5.300" fill="#fff" /><circle cx="8" cy="5" r="4.600" fill="#5c8db0" /></svg>;
const SizeIcon = () => <svg width="15" height="15" fill="none" stroke={G} strokeWidth="1.200"><circle cx="6.500" cy="8.500" r="5.600" /><circle cx="10.500" cy="4" r="3" /></svg>;
const Db = ({ pause }: { pause?: boolean }) => (
  <svg width="18" height="18"><path d="M0 3V14Q6 17.500 11 14V3Z" fill={G} /><ellipse cx="5.500" cy="3" rx="5.500" ry="2.500" fill={G} stroke="#f0f0f0" strokeWidth=".8" />{pause && <path d="M8 9H18V18H8Z" fill="#f0f0f0" />}{pause && <path d="M10.500 10V18M14.500 10V18" stroke="#3b6ab3" strokeWidth="2.600" />}</svg>
);
const Legends: [number, string][] = [[1.500, "$10,547"], [5, "$2,000,000"], [7, "$4,000,000"], [8.500, "$6,000,000"], [10.300, "$8,951,931"]];

const FieldRow = ({ level, kind, text, it }: { level: number; kind: Kind; text: string; it?: boolean }) => {
  const ex = kind === "folder" || kind === "hier";
  return (
    <Field pl={5 + level * 16} it={it}>
      <Slot w={18}>{ex && <Expander />}</Slot><Slot w={24}>{kinds[kind]}</Slot>{text}
    </Field>
  );
};

const TableauWindow = () => (
  <Tableau>
    <TitleBar>
      <svg width="17" height="17"><rect x=".5" y=".5" width="15" height="15" fill="#f5f6f8" stroke="#444" /><path d="M3 5H6M4.500 3.500V6.500M9 3.500H12M10.500 2V5M6 9H9M7.500 7.500V10.500M2 12H6M4 10V14M10 12H13M11.500 10.500V13.500M11 7.500H14M12.500 6V9" stroke="#2f5b9c" /></svg>
      <h1>Tableau - Book2</h1>
      <WindowButtons red pr={-1} />
    </TitleBar>
    <Inner>
      <MenuBar>
        {([["File", 34], ["Data", 40], ["Worksheet", 72], ["Dashboard", 73], ["Story", 44], ["Analysis", 59], ["Map", 40], ["Format", 54], ["Server", 49], ["Window", 60], ["Help", 40]] as [string, number][]).map(([t, w]) => <Word key={t} w={w}>{t}</Word>)}
        <Spacer />
        <Corner bg="#f6f6f4"><svg width="14" height="8"><path d="M0 .5H14M0 7.500H14" stroke="#99937c" /><path d="M1 4H4M5.500 4H8.500M10 4H13" stroke="#99937c" strokeWidth="3" /></svg></Corner>
        <Corner bg="#e2e9f5"><svg width="10" height="8"><path d="M0 0H4.500V3.500H0ZM5.500 0H10V3.500H5.500ZM0 4.500H4.500V8H0ZM5.500 4.500H10V8H5.500Z" fill="#8b95a3" /></svg></Corner>
        <Corner bg="#fff"><svg width="9" height="12" fill="none" stroke="#666"><ellipse cx="4.500" cy="2.500" rx="4" ry="1.800" /><path d="M.5 2.500V10Q4.500 12.500 8.500 10V2.500" /></svg></Corner>
        <Corner bg="#fff"><svg width="12" height="10"><path d="M6 0L12 5.500H10.500V10H7.500V6.500H5V10H1.500V5.500H0Z" fill="#ea9a4e" /></svg></Corner>
      </MenuBar>
      <ToolBar>
        <Cell w={26}><svg width="16" height="14"><path d="M15 7H2M8 1.500L2 7L8 12.500" fill="none" stroke={G} strokeWidth="2.800" /></svg></Cell>
        <Cell w={26}><svg width="16" height="14"><path d="M0 7H13M7 1.500L13 7L7 12.500" fill="none" stroke={L} strokeWidth="2.800" /></svg></Cell>
        <Cell w={24}><svg width="15" height="14"><path d="M0 0H15V14H0Z" fill={G} /><path d="M3 9H12V14H3Z" fill="#f0f0f0" /><path d="M5 10H7V13H5Z" fill={G} /></svg></Cell>
        <Sep w={11} /><Cell w={23}><Db /></Cell><Sep w={8} />
        <Cell w={24}><svg width="20" height="16"><path d="M7 1.500H19.500V14.500H2.500V9" fill="none" stroke={G} /><path d="M5.500 14V10M9.500 14V7M13 14V5M16.500 14V8" stroke={G} strokeWidth="2.200" /><path d="M0 4.500H8M4 .5V8.500" stroke="#3b6ab3" strokeWidth="2.200" /></svg></Cell>
        <Cell w={15}><Caret /></Cell>
        <Cell w={25}><svg width="18" height="18" fill="none" stroke={G}><rect x="6.500" y=".5" width="11" height="10" /><path d="M4.500 7.500H.5V17.500H12.500V13" /><path d="M9.500 10V7M12.500 10V4M15 10V6M4.500 17V14M7.500 17V12M10.500 17V13.500" strokeWidth="1.800" /></svg></Cell>
        <Cell w={24}><svg width="20" height="17"><path d="M12 14.500H.5V1.500H16.500V9" fill="none" stroke={G} /><path d="M4 14V9M7.500 14V6M11 14V10" stroke={G} strokeWidth="2.200" /><path d="M12 10L19 16.500M19 10L12 16.500" stroke="#bf5535" strokeWidth="2" /></svg></Cell>
        <Cell w={14}><Caret /></Cell><Sep w={10} />
        <Cell w={22}><Db pause /></Cell><Cell w={15}><Caret /></Cell>
        <Cell w={23}><svg width="17" height="14" fill="none" stroke={L} strokeWidth="2.200"><path d="M2 6A6.500 5.500 0 0 1 13 3M14 8A6.500 5.500 0 0 1 3 11" /><path d="M15 0V5H10M1 14V9H6" strokeWidth="1.600" /></svg></Cell>
        <Cell w={14}><Caret c="#b5b5b5" /></Cell><Sep w={9} />
        <Cell w={26}><svg width="17" height="16" fill="none" stroke={G}><path d="M0 2H17M2 5V16" strokeWidth="3.500" strokeDasharray="3.500 1.200" /><path d="M7.500 13.500Q14 13 13.500 7M10 10.500L7 13.500L10 16M11 9L13.500 6.500L16 9" strokeWidth="1.400" /></svg></Cell>
        <Cell w={26}><svg width="18" height="14"><path d="M3 0V8M.5 5.500L3 8.500L5.500 5.500" stroke={L} strokeWidth="1.600" fill="none" /><path d="M8 2H11M8 7H14M8 12H18" stroke={L} strokeWidth="3" /></svg></Cell>
        <Cell w={25}><svg width="18" height="14"><path d="M3 0V8M.5 5.500L3 8.500L5.500 5.500" stroke={L} strokeWidth="1.600" fill="none" /><path d="M8 2H18M8 7H14M8 12H11" stroke={L} strokeWidth="3" /></svg></Cell>
        <Cell w={24}><Clip c="#bcbec1" s={16} /></Cell><Cell w={14}><Caret c="#b5b5b5" /></Cell>
        <Cell w={27}>Abc</Cell><Sep w={7} />
        <Cell w={24}><svg width="20" height="14"><rect x=".5" y=".5" width="14" height="13" fill="none" stroke={G} /><path d="M3 13V8M6 13V5M9 13V3M12 13V7" stroke={G} strokeWidth="2" /><path d="M18 0V4M18 5V9M18 10V14" stroke="#3b6ab3" strokeWidth="3.500" /></svg></Cell>
        <Cell w={12}><Caret /></Cell>
        <Combo><svg width="9" height="7"><path d="M1 1.500L4.500 5L8 1.500" stroke="#bbb" strokeWidth="2" fill="none" /></svg></Combo>
        <Cell w={24}><svg width="16" height="10"><path d="M0 5H6" stroke={G} strokeWidth="1.400" /><path d="M5.500 .5V9.500M14.500 0V10" stroke={G} strokeWidth="1.600" /><path d="M6 2.500L9 4H14V7H9L6 8Z" fill={G} /></svg></Cell>
        <Sep w={10} />
        <Cell w={22}><svg width="16" height="14"><path d="M13 0L15 2L6 11L1 13L3 8Z" fill={G} /><path d="M5 13H14" stroke="#3b6ab3" strokeWidth="2" /></svg></Cell>
        <Cell w={14}><Caret /></Cell><Sep w={10} />
        <Cell w={24}><svg width="16" height="14" fill="none" stroke={G}><path d="M0 1.500H16" strokeWidth="2" /><rect x="1.500" y="2" width="12.500" height="8" /><path d="M5 13.500L8 10.500L11 13.500" strokeWidth="1.600" /></svg></Cell>
        <Sep w={2} />
        <Spacer />
        <ShowMe><svg width="17" height="13"><path d="M2.500 12V4" stroke="#bb8d09" strokeWidth="3" /><path d="M6.500 12V0" stroke="#96330a" strokeWidth="3" /><path d="M10.500 12V3" stroke="#24a52e" strokeWidth="3" /><path d="M14.500 12V6" stroke="#2a3cff" strokeWidth="3" /><path d="M0 12.500H17" stroke="#6a7481" /></svg>Show Me</ShowMe>
      </ToolBar>
      <Work>
        <Side>
          <SideHead h={20} bg="#dadada" bold>Data<Spacer /><svg width="7" height="9"><path d="M1 3L3.500 .5L6 3ZM1 6L3.500 8.500L6 6Z" fill="#666" /><path d="M0 4.500H7" stroke="#888" /></svg></SideHead>
          <SideHead h={21} bg="#efefef" style={{ gap: 1, paddingLeft: 8, borderTop: "1px solid #999" }}>
            <svg width="16" height="15"><rect x=".5" y="1" width="10" height="13" rx="2" fill="#fff" stroke="#8b8b8b" /><path d="M.5 3.500H10.500" stroke="#bbb" /><circle cx="11.500" cy="10.500" r="4.300" fill="#4a7fc9" /><path d="M9.500 10.500L11 12L13.500 9" stroke="#fff" fill="none" /></svg>
            Sample - Superstore - English...
          </SideHead>
          <SideHead>Dimensions<Spacer />
            <svg width="12" height="10"><path d="M0 .5H12M0 3.500H12M0 6.500H12M0 9.500H12" stroke="#888" strokeDasharray="3 1" /></svg>
            <svg width="10" height="10"><circle cx="6" cy="4" r="3" fill="none" stroke="#555" strokeWidth="1.300" /><path d="M4 6L1 9" stroke="#555" strokeWidth="1.800" /></svg>
            <svg width="11" height="5"><path d="M3 .5H10L6.500 4.500Z" fill="#777" /></svg>
          </SideHead>
          <List h={393}>{DIMS.map(([l, k, t, it]) => <FieldRow key={t} level={l} kind={k} text={t} it={it} />)}</List>
          <SideHead>Measures</SideHead>
          <List h={264}>
            {MEASURES.map((m) => <Field key={m} pl={9}><Slot w={22}><Hash /></Slot>{m}</Field>)}
            <Field pl={9} it><Slot w={22}><Globe c={GR} /></Slot>Latitude (generated)</Field>
            <Field pl={9} it><Slot w={22}><Globe c={GR} /></Slot>Longitude (generated)</Field>
            <Field pl={5} it><Slot w={26}><Hash eq /></Slot>Number of Records</Field>
            <Field pl={9} it><Slot w={22}><Hash /></Slot>Measure Values</Field>
          </List>
          <SideHead>Sets</SideHead>
          <List h={79}>
            <Field pl={7}><Slot w={24}><SetIcon /></Slot>Countries - High Profit &amp; Sales</Field>
            <Field pl={7}><Slot w={24}><SetIcon /></Slot>Top Customers by Profit</Field>
          </List>
          <SideHead>Parameters</SideHead>
          <List h={68}>
            <Field pl={9}><Slot w={22}><Hash /></Slot>Profit Bin Size</Field>
            <Field pl={9}><Slot w={22}><Hash /></Slot>Top Customers</Field>
          </List>
        </Side>
        <Canvas>
          <Panels>
            <Stack>
              <Card h={55}><CardTitle>Pages</CardTitle></Card>
              <Card h={67}><CardTitle>Filters</CardTitle></Card>
              <Card h={248}>
                <CardTitle>Marks</CardTitle>
                <Select><svg width="15" height="12"><circle cx="10.500" cy="4.500" r="4" fill="#5c8db0" /><circle cx="4.500" cy="7" r="4" fill="#8fb2cc" /></svg>Automatic<Spacer /><svg width="9" height="7"><path d="M1 1.500L4.500 5L8 1.500" stroke="#444" strokeWidth="1.800" fill="none" /></svg></Select>
                <MarkGrid>
                  <MarkBtn><ColorIcon />Color</MarkBtn><MarkBtn><SizeIcon />Size</MarkBtn><MarkBtn><Abc123><span>Abc</span><span>123</span></Abc123>Label</MarkBtn>
                  <MarkBtn>Detail</MarkBtn><MarkBtn>Tooltip</MarkBtn>
                </MarkGrid>
                <Row h={5} />
                <MarkRow><span><ColorIcon /></span><Pill w={121} pl={23}>SUM(Profit)</Pill></MarkRow>
                <MarkRow><span><SizeIcon /></span><Pill w={121} pl={23}>SUM(Sales)</Pill></MarkRow>
                <MarkRow><span /><Pill w={121} pl={7} blue><svg width="9" height="9" fill="none" stroke="#5f6f87"><rect x=".5" y=".5" width="8" height="8" /><path d="M2 4.500H7M4.500 2V7" /></svg><span style={{ marginLeft: -1, letterSpacing: -0.15 }}>Country / Region</span></Pill></MarkRow>
              </Card>
              <Card h={119}>
                <CardTitle>SUM(Sales)</CardTitle>
                {Legends.map(([r, t]) => <Legend key={t}><svg width="30" height="20"><circle cx="15" cy="10" r={r} fill="#d4d4d4" stroke="#b0b0b0" strokeWidth="1.200" /></svg>{t}</Legend>)}
              </Card>
              <Card h={55}>
                <CardTitle>SUM(Profit)</CardTitle>
                <Ramp /><RampText><span>$1,608</span><span>$1,312,442</span></RampText>
              </Card>
            </Stack>
            <Stack>
              <Shelf><ShelfName><svg width="12" height="13"><path d="M2 4V13M6 4V13M10 4V13" stroke="#a9afb8" strokeWidth="3" /><path d="M.5 1.500H3.500M4.500 1.500H7.500M8.500 1.500H11.500" stroke={G} strokeWidth="3" /></svg>Columns</ShelfName><Pill w={149} pl={7}>Longitude (generated)</Pill></Shelf>
              <Shelf><ShelfName><svg width="13" height="12"><path d="M4 2H13M4 6H13M4 10H13" stroke="#a9afb8" strokeWidth="2.800" /><path d="M0 2H3M0 6H3M0 10H3" stroke={G} strokeWidth="2.800" /></svg>Rows</ShelfName><Pill w={149} pl={7}>Latitude (generated)</Pill></Shelf>
              <Viz>
                <svg width="566" height="820"><g transform="translate(-7 116)"><World id="coastB" tones={SOFT} k={1} /></g></svg>
                <Credit>© OpenStreetMap contributors</Credit>
              </Viz>
            </Stack>
          </Panels>
          <Tabs>
            <SheetTab w={71} ml={0}>Sheet 1</SheetTab>
            <SheetTab w={71} ml={3} on>Sheet 2</SheetTab>
            <SheetTab w={32} ml={7}><svg width="16" height="14"><path d="M5 2.500H14.500V12.500H1.500V7" fill="none" stroke={G} /><path d="M5 12V8M8.500 12V5M12 12V7" stroke={G} strokeWidth="1.800" /><path d="M0 3.500H6M3 .5V6.500" stroke="#3b6ab3" strokeWidth="1.800" /></svg></SheetTab>
            <SheetTab w={32} ml={3}><svg width="16" height="14"><path d="M6 2.500H14.500V12.500H1.500V7M1.500 8.500H14.500M8.500 2.500V12.500" fill="none" stroke={G} strokeWidth="1.200" /><path d="M0 3.500H6M3 .5V6.500" stroke="#3b6ab3" strokeWidth="1.800" /></svg></SheetTab>
          </Tabs>
        </Canvas>
      </Work>
      <Status>
        <Word w={68}>50 marks</Word><Word w={119}>1 row by 1 column</Word><Word w={200}>SUM(Profit): $6,717,483</Word>
        <Spacer /><Slice w={127} /><Slice w={27} /><Slice w={27} /><Slice w={47} />
        <Slice w={71}><svg width="70" height="19" fill="#a7a7a7"><path d="M8.500 6V13" stroke="#a7a7a7" /><path d="M14 6V13L10 9.500ZM29 6V13L25 9.500ZM41 6V13L45 9.500ZM56 6V13L60 9.500Z" /><path d="M61.500 6V13" stroke="#a7a7a7" /></svg></Slice>
        <Slice w={23}><svg width="22" height="19"><path d="M8 8L11 5L14 8ZM8 11L11 14L14 11Z" fill="#334e72" /><path d="M8 9.500H14" stroke="#334e72" /></svg></Slice>
      </Status>
    </Inner>
  </Tableau>
);

/* ---------- taskbar ---------- */

const TaskBar = styled.footer`
  grid-column: 1 / 3; height: 40px; display: flex; align-items: center; color: #fff; padding-left: 7px;
  background: linear-gradient(90deg, #2c4b69 0, #2d4d6c 25%, #2f5078 40%, #2c4a69 50%, #31527f 70%, #2d4c6c 75%, #30506f 100%);
`;
const Task = styled.div<{ w: number; tile?: "dim" | "lit" }>`
  width: ${(p) => p.w}px; height: 38px; flex: none; display: grid; place-items: center;
  ${(p) => p.tile === "dim" && "background: #566c84; border: 1px solid #7f91a4;"}
  ${(p) => p.tile === "lit" && "background: #8295a8; border: 1px solid #e3e8ee;"}
`;
const Clock = styled.div`width: 86px; text-align: center; font-size: 12px; line-height: 17px; letter-spacing: -0.4px;`;

const Tasks = () => (
  <TaskBar>
    <Task w={26}><svg width="26" height="26" fill="#fff"><path d="M0 4L11 2.500V12.500H0ZM12 2.300L26 .3V12.500H12ZM0 13.500H11V23.500L0 22ZM12 13.500H26V25.700L12 23.700Z" /></svg></Task>
    <Row w={20} />
    <Task w={46}><svg width="34" height="30"><path d="M2 4L5 1H12L13 4H24L25 2H31V27H2Z" fill="#e4c66d" /><path d="M1 6H32V27H1Z" fill="#f1dc93" /><path d="M1 9H32" stroke="#d3ae4e" /><path d="M5 2.500H9" stroke="#19a54a" strokeWidth="2.500" /><path d="M14 4.500H18" stroke="#c7352d" strokeWidth="2" /><path d="M21 6H25" stroke="#2d7fd0" strokeWidth="2" /><path d="M5 29V20Q5 16 9 16H25Q29 16 29 20V29H24V22H10V29Z" fill="#8fcbe8" stroke="#5da5cc" /></svg></Task>
    <Row w={10} />
    <Task w={58} tile="dim"><svg width="30" height="30"><circle cx="15" cy="15" r="14" fill="#f6cf2f" /><path d="M15 15L2.900 8A14 14 0 0 1 27.100 8Z" fill="#d93a2e" /><path d="M15 15L2.900 8A14 14 0 0 0 13 28.900L20 17Z" fill="#3f9f45" /><path d="M15 8.500H27.300A14 14 0 0 0 3 8L9 17Z" fill="#dc3b30" /><circle cx="15" cy="15" r="6.500" fill="#f2f2f2" /><circle cx="15" cy="15" r="5.100" fill="#3d80c8" /></svg></Task>
    <Row w={18} />
    <Task w={30}><svg width="24" height="24"><path d="M1 0H23Q24 0 24 1V17L17 24H1Q0 24 0 23V1Q0 0 1 0Z" fill="#fbe803" /><path d="M24 17H18V24Z" fill="#fff27a" /><circle cx="12" cy="9.500" r="4.500" fill="none" stroke="#d9b300" strokeWidth="1.300" /><path d="M10 13.500H14V17H10Z" fill="none" stroke="#d9b300" /></svg></Task>
    <Row w={32} />
    <Task w={30}><svg width="30" height="30"><circle cx="15" cy="15" r="14.700" fill="#8cbc06" /><path d="M5.500 9.500Q16 6.500 25 11M6.500 15Q15 12.500 23 17M7.500 20Q15 18 21.500 22" stroke="#111" strokeWidth="3" fill="none" strokeLinecap="round" /></svg></Task>
    <Row w={31} />
    <Task w={32}><svg width="32" height="26"><path d="M1 2L20 0 31 3V9L10 10 1 7Z" fill="#8b3a86" /><path d="M1 9L10 11 31 10V16L10 18 1 15Z" fill="#1a3fbc" /><path d="M1 17L10 19 31 17V23L10 26 1 22Z" fill="#1c8a37" /><path d="M2 4L11 6V9L2 7ZM2 11L11 13V17L2 14ZM2 19L11 20V25L2 22Z" fill="#ddd" /><path d="M18 0H23V26H18Z" fill="#a9742e" /><path d="M18.500 11H23V17H18.500Z" fill="#ddd" stroke="#333" /></svg></Task>
    <Row w={30} />
    <Task w={32}><svg width="32" height="28"><path d="M0 16L11 11 16 16 8 20Z" fill="#4b8cc9" /><path d="M11 11Q15 10 21 0L18 18 14 26 8 20Z" fill="#7a2d1f" /><path d="M21 0Q25 6 30 22Q25 19 21 23Q17 27 14 28Q19 15 21 0Z" fill="#e8722a" /></svg></Task>
    <Row w={17} />
    <Task w={58} tile="lit"><svg width="32" height="32"><rect x=".5" y=".5" width="31" height="31" fill="#eef0f2" stroke="#555" /><path d="M16 31L31 12V31Z" fill="#d9dcdf" /><g stroke="#1d5a92" fill="none"><path d="M3.500 21H18.500M11 14V28" strokeWidth="2.600" /><path d="M18 26H27M22.500 21.500V30.500M3 11H11M7 7V15M10.500 6H17.500M14 2.500V9.500M15 13H22M18.500 9.500V16.500M19 8H25M22 5V11M24 4H30M27 1.500V7" strokeWidth="1.600" /></g></svg></Task>
    <Spacer />
    <Row gap={8.5}>
      <svg width="17" height="6"><path d="M5 5.500L8.500 1L12 5.500Z" fill="#fff" /></svg>
      <svg width="16" height="18" fill="none" stroke="#fff" strokeWidth="1.400"><path d="M1 3H5V8H1Z" fill="#fff" /><path d="M3 8V17M1.700 0V4M4.300 0V4" /><rect x="8" y="3" width="5.500" height="12.500" strokeWidth="2" /><path d="M9 1.500H12.500" strokeWidth="2" /></svg>
      <svg width="15" height="13"><path d="M1 13V11M4 13V9M7 13V7M10 13V4M13.500 13V1" stroke="#fff" strokeWidth="2" /></svg>
      <svg width="17" height="16"><path d="M1 5.500H3.500L7 1.500V14.500L3.500 10.500H1Z" fill="#fff" /><path d="M9.500 5.500Q11 8 9.500 10.500M12 4Q14.200 8 12 12M14 2.500Q17 8 14 13.500" fill="none" stroke="#cfd8e2" strokeWidth="1.100" /></svg>
    </Row>
    <Clock>8:23 PM<br />10/4/2014</Clock>
  </TaskBar>
);

export default function App() {
  return (
    <>
      <Global />
      <Desktop>
        <BrowserWindow />
        <TableauWindow />
        <Tasks />
      </Desktop>
    </>
  );
}
